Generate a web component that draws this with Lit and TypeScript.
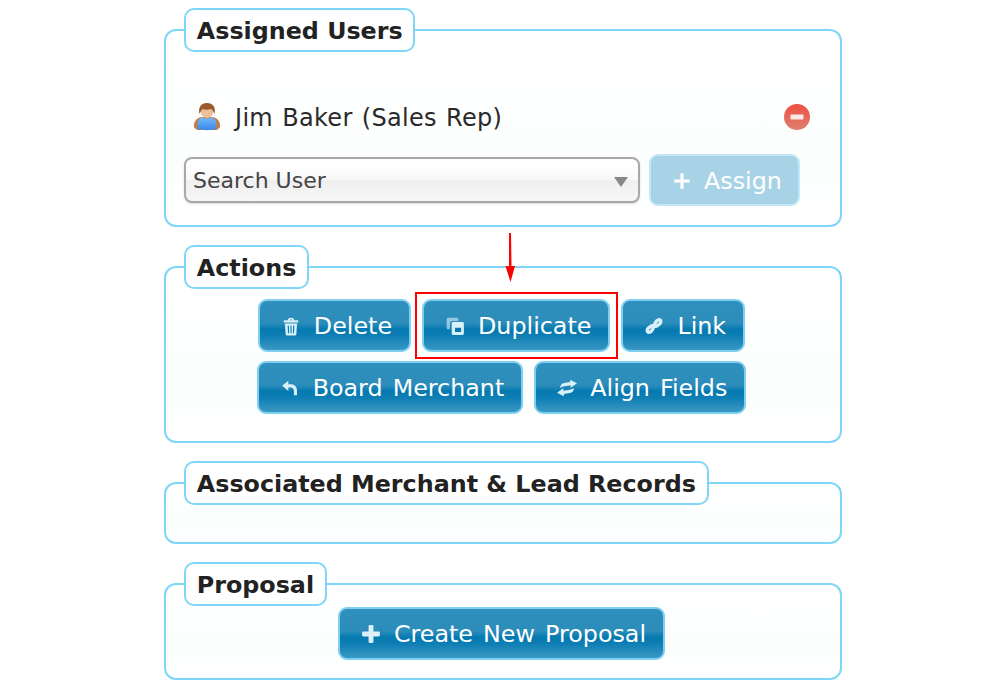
import { LitElement, html, css, svg } from "lit";
import { customElement } from "lit/decorators.js";

const icons: Record<string, unknown> = {
  trash: svg`<path d="M2.500 3.800h13v2h-13zM6.200 3.800C6.200.9 11.800.9 11.800 3.800h-1.500c0-1-2.600-1-2.600 0z"/><path fill-rule="evenodd" d="M3.500 6.800h11l-.7 9.300c0 .9-.6 1.400-1.400 1.400H5.600c-.8 0-1.400-.5-1.400-1.400zM6 8.500l.3 7h1L7.100 8.500zM8.500 8.500v7h1v-7zM10.900 8.500l-.2 7h1l.3-7z"/>`,
  copy: svg`<path fill-rule="evenodd" d="M3 1.500h7.500c1 0 1.500.5 1.500 1.500v1.500H6.500c-1.300 0-2 .7-2 2V12H3c-1 0-1.500-.5-1.500-1.500V3c0-1 .5-1.500 1.500-1.500z" opacity=".6"/><path fill-rule="evenodd" d="M7.500 5.500h8c1 0 1.500.5 1.500 1.500v8.500c0 1-.5 1.500-1.500 1.500h-8c-1 0-1.500-.5-1.500-1.500V7c0-1 .5-1.500 1.500-1.500zM9 10.500V14.500h5.500V10.500z"/>`,
  link: svg`<path fill="none" stroke="currentColor" stroke-width="3" stroke-linecap="round" d="M9.800 6.500l1.700-2.200c1-1 2.500-1.200 3.200-.5s.5 2.200-.5 3.200l-2.200 1.700c-1 .8-2 .8-2.800.3M8.200 11.500l-1.700 2.200c-1 1-2.500 1.200-3.200.5s-.5-2.200.5-3.200l2.200-1.700c1-.8 2-.8 2.800-.3"/>`,
  back: svg`<path d="M7.500 2.500v3.200H9.500c3.600 0 5.800 2.300 5.800 5.800v4h-2.800v-3.700c0-2-1.100-3.200-3-3.200h-2v3.100L2 7z"/>`,
  swap: svg`<path d="M11.800 1.500L18 4.700l-5.700 4.100-.1-2.300-5.700.9C5 7.700 3.700 8.200 2.900 8.900 2.800 6.300 4.400 4.700 6.500 4.400l5.400-.7zM6.200 16.500L0 13.300l5.700-4.100.1 2.300 5.700-.9c1.600-.3 2.900-.8 3.700-1.500.1 2.600-1.500 4.200-3.600 4.500l-5.400.7z"/>`,
  plus: svg`<path d="M6.800 2c0-.6.4-1 1-1h2.400c.6 0 1 .4 1 1v4.800H16c.6 0 1 .4 1 1v2.400c0 .6-.4 1-1 1h-4.800V16c0 .6-.4 1-1 1H7.800c-.6 0-1-.4-1-1v-4.800H2c-.6 0-1-.4-1-1V7.800c0-.6.4-1 1-1h4.800z"/>`,
  thin: svg`<path d="M7.600 2h2.800v5.600H16v2.800h-5.600V16H7.600v-5.600H2V7.600h5.600z"/>`,
};

@customElement("app-root")
export class AppRoot extends LitElement {
  static styles = css`
    :host {
      display: block;
      position: relative;
      width: 1000px;
      height: 689px;
      overflow: hidden;
      background: #fff;
      font-family: "DejaVu Sans", Verdana, sans-serif;
      color: #222;
    }
    .col {
      width: 678px;
      margin-left: 164px;
      padding-top: 8px;
      display: flex;
      flex-direction: column;
    }
    fieldset {
      margin: 0;
      padding: 0 18px;
      min-width: 0;
      border: 2px solid #7fd6f8;
      border-radius: 12px;
      background: linear-gradient(#fff, #fcfefe 70%, #fff);
    }
    legend {
      margin-left: 0;
      padding: 0 10.800px;
      height: 44px;
      box-sizing: border-box;
      line-height: 42px;
      border: 2px solid #7fd6f8;
      border-radius: 10px;
      background: #fff;
      font-size: 23.800px;
      font-weight: 700;
      color: #222;
      white-space: nowrap;
    }
    .users { height: 215px; margin-bottom: 18px; }
    .actions { height: 194px; margin-bottom: 18px; }
    .assoc { height: 79px; margin-bottom: 18px; }
    .proposal { height: 114px; }
    .user {
      display: flex;
      align-items: center;
      height: 40px;
      margin-top: 46px;
      padding-left: 8px;
      font-size: 24px;
      letter-spacing: 0.3px;
      word-spacing: 1.300px;
      color: #2a2a2a;
    }
    .user svg.p { width: 30px; height: 30px; margin-right: 13px; margin-top: -2px; flex: none; }
    .user svg.r { width: 28px; height: 28px; margin-left: auto; margin-right: 11px; margin-top: -2px; }
    .search {
      display: flex;
      align-items: center;
      gap: 9px;
      margin-top: 16px;
    }
    .select {
      box-sizing: border-box;
      width: 456px;
      height: 46px;
      display: flex;
      align-items: center;
      justify-content: space-between;
      padding: 0 10px 0 7px;
      border: 2px solid #a8a8a8;
      border-radius: 8px;
      background: linear-gradient(#fff 20%, #f8f8f8 48%, #efefef 52%, #f7f7f7);
      box-shadow: 0 1px 2px rgba(0, 0, 0, 0.15);
      font-size: 22px;
      color: #444;
    }
    .caret {
      width: 0;
      height: 0;
      margin-top: 3px;
      border-left: 7px solid transparent;
      border-right: 7px solid transparent;
      border-top: 10px solid #888;
    }
    .btn {
      box-sizing: border-box;
      height: 53px;
      display: inline-flex;
      align-items: center;
      padding: 0 17px 0 21px;
      border: 2px solid #7fd0f0;
      border-radius: 9px;
      background: linear-gradient(#2f8fbd, #2c8dbb 45%, #0479b0 58%, #0d7eb3 70%, #3a97c3);
      color: #fff;
      font-size: 23.800px;
      word-spacing: 2.500px;
      white-space: nowrap;
    }
    .btn svg {
      width: 20px;
      height: 20px;
      margin-right: 13px;
      fill: currentColor;
      color: #d9f0f8;
      flex: none;
    }
    .btn.off {
      background: #a8d2e6;
      border-color: #c3e7f6;
      color: #fff;
      height: 52px;
      padding: 2px 16px 0 21px;
    }
    .btn.off svg { color: #fff; margin-right: 12px; }
    .rows {
      display: flex;
      flex-direction: column;
      align-items: center;
      gap: 9px;
      margin-top: 10px;
      padding-right: 3px;
    }
    .row { display: flex; gap: 11px; }
    .proposal .rows { margin-top: 1px; }
    .marks { position: absolute; inset: 0; pointer-events: none; }
    .focus {
      position: absolute;
      left: 415px;
      top: 292px;
      width: 203px;
      height: 67px;
      box-sizing: border-box;
      border: 2px solid #f00;
    }
    .arrow { position: absolute; left: 502px; top: 232px; width: 16px; height: 52px; }
  `;

  private btn(icon: string, label: string, cls = "") {
    return html`<div class="btn ${cls}">
      <svg viewBox="0 0 18 18">${icons[icon]}</svg>${label}
    </div>`;
  }

  render() {
    return html`
      <div class="col">
        <fieldset class="users">
          <legend>Assigned Users</legend>
          <div class="user">
            <svg class="p" viewBox="0 0 30 30">
              <defs>
                <linearGradient id="sh" x1="0" y1="0" x2="0" y2="1">
                  <stop offset="0" stop-color="#74bcff" />
                  <stop offset="1" stop-color="#3a86e8" />
                </linearGradient>
              </defs>
              <path d="M2 25c-1-5 3-9 7-10h12c4 1 8 5 7 10-1 2-3 3-4 3H6c-1 0-3-1-4-3z" fill="#c07f48" />
              <path d="M6 27c-1-6 0-10 4-12 2 2 8 2 10 0 4 2 5 6 4 12-2 1.500-16 1.500-18 0z" fill="url(#sh)" />
              <circle cx="15" cy="9.500" r="6.500" fill="#eec09a" />
              <path d="M7.500 12C6 5 9 1 15 1s9 4 7.500 11c-1-2-1.500-4-3.500-5-3 1-6 1-8 0-2 1-2.500 3-3.500 5z" fill="#9a5a2c" />
            </svg>
            Jim Baker (Sales Rep)
            <svg class="r" viewBox="0 0 28 28">
              <defs>
                <linearGradient id="rd" x1="0" y1="0" x2="0" y2="1">
                  <stop offset="0" stop-color="#ec4f42" />
                  <stop offset="1" stop-color="#e08070" />
                </linearGradient>
              </defs>
              <circle cx="14" cy="14" r="13" fill="url(#rd)" />
              <rect x="7.500" y="11.500" width="13" height="5" rx="1" fill="#fbe9e6" />
            </svg>
          </div>
          <div class="search">
            <div class="select">Search User<span class="caret"></span></div>
            ${this.btn("thin", "Assign", "off")}
          </div>
        </fieldset>

        <fieldset class="actions">
          <legend>Actions</legend>
          <div class="rows">
            <div class="row">
              ${this.btn("trash", "Delete")} ${this.btn("copy", "Duplicate")} ${this.btn("link", "Link")}
            </div>
            <div class="row">
              ${this.btn("back", "Board Merchant")} ${this.btn("swap", "Align Fields")}
            </div>
          </div>
        </fieldset>

        <fieldset class="assoc">
          <legend>Associated Merchant &amp; Lead Records</legend>
        </fieldset>

        <fieldset class="proposal">
          <legend>Proposal</legend>
          <div class="rows">${this.btn("plus", "Create New Proposal")}</div>
        </fieldset>
      </div>

      <div class="marks">
        <div class="focus"></div>
        <svg class="arrow" viewBox="0 0 16 52">
          <path d="M7 1h2l.5 33h3.500L8.500 50 3.500 34H7z" fill="#f00" />
        </svg>
      </div>
    `;
  }
}
